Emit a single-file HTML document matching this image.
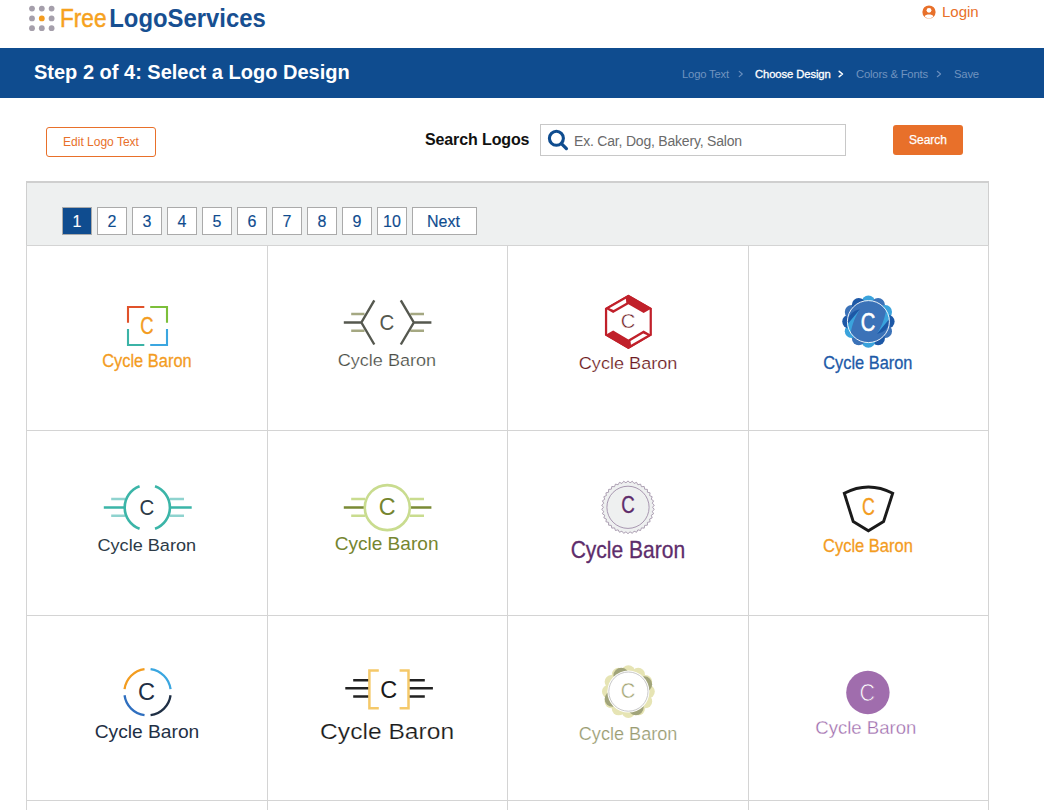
<!DOCTYPE html>
<html><head><meta charset="utf-8">
<style>
*{margin:0;padding:0;box-sizing:border-box}
html,body{width:1044px;height:810px;overflow:hidden;background:#fff;font-family:"Liberation Sans",sans-serif}
.a{position:absolute;white-space:nowrap}
#bar{position:absolute;left:0;top:48px;width:1044px;height:50px;background:#0f4c8f}
.crumb{position:absolute;top:67.6px;font-size:11.3px;color:#6f93bf;letter-spacing:-0.2px}
.pg{position:absolute;top:207px;height:28px;border:1px solid #aaa;background:#fff;color:#0f4c8f;font-size:16px;text-align:center;line-height:28px;-webkit-text-stroke:0.15px currentColor}
.grid{position:absolute;left:26px;top:245px;width:963px;height:600px}
.vl{position:absolute;width:1px;background:#d4d4d4}
.hl{position:absolute;height:1px;background:#d4d4d4}
svg{position:absolute;overflow:visible}
</style></head><body>
<!-- header logo -->
<svg style="left:0;top:0" width="300" height="40">
<g fill="#a59fab">
<circle cx="32" cy="8.6" r="2.9"/><circle cx="41.8" cy="8.6" r="2.9"/><circle cx="51.6" cy="8.6" r="2.9"/>
<circle cx="32" cy="18.4" r="2.9"/><circle cx="51.6" cy="18.4" r="2.9"/>
<circle cx="32" cy="28.2" r="2.9"/><circle cx="41.8" cy="28.2" r="2.9"/><circle cx="51.6" cy="28.2" r="2.9"/>
</g>
<circle cx="41.8" cy="18.4" r="2.9" fill="#f39c1f"/>
<text x="60" y="27.4" font-size="26" fill="#f6a21e" stroke="#f6a21e" stroke-width="0.5" textLength="46.5" lengthAdjust="spacingAndGlyphs">Free</text>
<text x="109.3" y="27.4" font-size="26" font-weight="bold" fill="#174f91" textLength="156.5" lengthAdjust="spacingAndGlyphs">LogoServices</text>
</svg>
<!-- login -->
<svg style="left:920.5px;top:3.9px" width="16" height="16" viewBox="0 0 16 16">
<circle cx="8" cy="8" r="6.6" fill="#e8702a"/>
<circle cx="8" cy="6.3" r="2.4" fill="#fff"/>
<path d="M3.6 12.3 C4.6 9.9 11.4 9.9 12.4 12.3 C11.3 13.6 9.8 14.4 8 14.4 C6.2 14.4 4.7 13.6 3.6 12.3Z" fill="#fff"/>
</svg>
<div class="a" style="left:942px;top:3px;font-size:15px;color:#e8702a">Login</div>

<div id="bar"></div>
<div class="a" style="left:34px;top:61px;font-size:20px;font-weight:bold;color:#fff">Step 2 of 4: Select a Logo Design</div>
<div class="crumb" style="left:682px">Logo Text</div>
<svg style="left:0;top:0" width="1044" height="100"><g fill="none" stroke-linecap="round" stroke-linejoin="round"><path d="M739.2,71.3 L742.3,74 L739.2,76.7" stroke="#6a8fbf" stroke-width="1.1"/><path d="M839.2,71.3 L842.5,74 L839.2,76.7" stroke="#fff" stroke-width="1.5"/><path d="M937.3,71.3 L940.6,74 L937.3,76.7" stroke="#6a8fbf" stroke-width="1.1"/></g></svg>
<div class="crumb" style="left:755px;color:#fff;-webkit-text-stroke:0.3px #fff;letter-spacing:-0.12px">Choose Design</div>
<div class="crumb" style="left:856px">Colors &amp; Fonts</div>
<div class="crumb" style="left:954px">Save</div>

<!-- toolbar -->
<div class="a" style="left:46px;top:127px;width:110px;height:30px;border:1px solid #e8702a;border-radius:3px;color:#e8702a;font-size:12px;text-align:center;line-height:28px">Edit Logo Text</div>
<div class="a" style="left:425px;top:131px;font-size:16px;font-weight:bold;color:#111;letter-spacing:-0.12px">Search Logos</div>
<div class="a" style="left:540px;top:124px;width:306px;height:32px;border:1px solid #c8c8c8;background:#fff"></div>
<svg style="left:547px;top:130px" width="22" height="22" viewBox="0 0 22 22">
<circle cx="9.4" cy="8.3" r="7" fill="none" stroke="#0f4c8f" stroke-width="3.1"/>
<path d="M14.4 13.6 L19.4 18.6" stroke="#0f4c8f" stroke-width="3.3" stroke-linecap="round"/>
</svg>
<div class="a" style="left:574px;top:132.5px;font-size:14px;color:#6a6a6a;letter-spacing:-0.2px">Ex. Car, Dog, Bakery, Salon</div>
<div class="a" style="left:893px;top:125px;width:70px;height:30px;background:#e8702a;border-radius:3px;color:#fff;font-size:12px;text-align:center;line-height:30px;-webkit-text-stroke:0.25px #fff">Search</div>

<!-- grey pagination area -->
<div class="a" style="left:26px;top:181px;width:963px;height:64px;background:#eef0f0;border-top:2px solid #cfcfcf;border-left:1px solid #cfcfcf;border-right:1px solid #cfcfcf"></div>
<div class="pg" style="left:62px;width:30px;background:#0f4c8f;color:#fff">1</div>
<div class="pg" style="left:97px;width:30px">2</div>
<div class="pg" style="left:132px;width:30px">3</div>
<div class="pg" style="left:167px;width:30px">4</div>
<div class="pg" style="left:202px;width:30px">5</div>
<div class="pg" style="left:237px;width:30px">6</div>
<div class="pg" style="left:272px;width:30px">7</div>
<div class="pg" style="left:307px;width:30px">8</div>
<div class="pg" style="left:342px;width:30px">9</div>
<div class="pg" style="left:377px;width:30px">10</div>
<div class="pg" style="left:412px;width:65px;padding-right:2px">Next</div>

<!-- grid lines -->
<div class="vl" style="left:26px;top:245px;height:565px"></div>
<div class="vl" style="left:267px;top:245px;height:565px"></div>
<div class="vl" style="left:507px;top:245px;height:565px"></div>
<div class="vl" style="left:748px;top:245px;height:565px"></div>
<div class="vl" style="left:988px;top:245px;height:565px"></div>
<div class="hl" style="left:26px;top:245px;width:963px"></div>
<div class="hl" style="left:26px;top:430px;width:963px"></div>
<div class="hl" style="left:26px;top:615px;width:963px"></div>
<div class="hl" style="left:26px;top:800px;width:963px"></div>

<!-- LOGOS -->
<svg style="left:0;top:0" width="1044" height="810" font-family="Liberation Sans">
<g fill="none" stroke-width="2.1">
<path d="M144.3,307 H128 V322.8" stroke="#e0522a"/>
<path d="M150.2,307 H167 V322.8" stroke="#7cbf3a"/>
<path d="M128,329 V345 H144.3" stroke="#3bb3a6"/>
<path d="M167,329 V345 H150.2" stroke="#3ba6e0"/>
</g>
<g fill="none" stroke-width="2.4">
<path d="M351.2,314 H364.5 M351.2,330.8 H364.5 M410.3,314 H424 M410.3,330.8 H424" stroke="#a5a882"/>
<path d="M343.8,322.5 H361.4 M374.3,300.4 L361.4,322.5 L374.3,344.5 M413.8,322.5 H431.4 M400.8,300.4 L413.8,322.5 L400.8,344.5" stroke="#55584f"/>
</g>
<polygon points="628.40,294.70 651.87,308.25 651.87,335.35 628.40,348.90 604.93,335.35 604.93,308.25" fill="#c0202a"/>
<polygon points="628.40,297.30 649.62,309.55 649.62,334.05 628.40,346.30 607.18,334.05 607.18,309.55" fill="#fff"/>
<polygon points="604.93,308.25 628.40,294.70 651.87,308.25 643.64,313.00 628.40,304.20 613.16,313.00" fill="#c0202a"/>
<polygon points="609.30,308.32 625.85,298.77 626.29,302.72 613.63,310.03" fill="#fff"/>
<g transform="rotate(180 628.4 321.8)"><polygon points="604.93,308.25 628.40,294.70 651.87,308.25 643.64,313.00 628.40,304.20 613.16,313.00" fill="#c0202a"/><polygon points="609.30,308.32 625.85,298.77 626.29,302.72 613.63,310.03" fill="#fff"/></g>
<circle cx="868.4" cy="321.6" r="22" fill="#3b72b8"/>
<circle cx="868.40" cy="302.20" r="6.8" fill="#3aa3dc"/>
<circle cx="878.10" cy="304.80" r="6.8" fill="#3b72b8"/>
<circle cx="885.20" cy="311.90" r="6.8" fill="#3aa3dc"/>
<circle cx="887.80" cy="321.60" r="6.8" fill="#1d58a6"/>
<circle cx="885.20" cy="331.30" r="6.8" fill="#3b72b8"/>
<circle cx="878.10" cy="338.40" r="6.8" fill="#1d58a6"/>
<circle cx="868.40" cy="341.00" r="6.8" fill="#3aa3dc"/>
<circle cx="858.70" cy="338.40" r="6.8" fill="#3b72b8"/>
<circle cx="851.60" cy="331.30" r="6.8" fill="#3aa3dc"/>
<circle cx="849.00" cy="321.60" r="6.8" fill="#1d58a6"/>
<circle cx="851.60" cy="311.90" r="6.8" fill="#3b72b8"/>
<circle cx="858.70" cy="304.80" r="6.8" fill="#1d58a6"/>
<circle cx="868.4" cy="321.6" r="21" fill="#3b72b8"/>
<path d="M859.6,309.6 Q853.5,317 847.2,324 A21.3,21.3 0 0 0 850.5,335.5 C851.5,327 853.5,320 859.6,309.6Z" fill="#3aa3dc"/><path d="M847.4,320.5 Q849.5,311.5 859.8,309.2 Q853.5,317 847.2,324.5Z" fill="#1d58a6"/>
<g transform="rotate(180 868.4 321.6)"><path d="M859.6,309.6 Q853.5,317 847.2,324 A21.3,21.3 0 0 0 850.5,335.5 C851.5,327 853.5,320 859.6,309.6Z" fill="#3aa3dc"/><path d="M847.4,320.5 Q849.5,311.5 859.8,309.2 Q853.5,317 847.2,324.5Z" fill="#1d58a6"/></g>
<circle cx="868.4" cy="321.6" r="21" fill="none" stroke="#fff" stroke-width="0.9"/>
<g fill="none" stroke-width="2.4">
<path d="M111.2,499 H125 M111.2,515.8 H125 M169.6,499 H184 M169.6,515.8 H184" stroke="#8fd3cf"/>
<path d="M103.8,507.5 H125 M169.6,507.5 H191.7" stroke="#3bb5a8"/>
<path d="M139.57,486.26 A22.6,22.6 0 0 0 139.57,528.74 M155.03,486.26 A22.6,22.6 0 0 1 155.03,528.74" stroke="#3bb5a8" stroke-width="2.6"/>
</g>
<g fill="none" stroke-width="2.4">
<path d="M351.2,499 H365 M351.2,515.8 H365 M409.6,499 H424 M409.6,515.8 H424" stroke="#c9dc8f"/>
<path d="M343.8,507.5 H365 M409.6,507.5 H431.4" stroke="#7a8a35"/>
<circle cx="387.3" cy="507.6" r="22.5" stroke="#c9dc8f" stroke-width="2.6"/>
</g>
<polygon points="628.00,480.90 630.03,482.78 632.35,481.26 634.04,483.45 636.57,482.33 637.88,484.77 640.57,484.08 641.45,486.71 644.22,486.47 644.66,489.20 647.42,489.42 647.41,492.19 650.10,492.86 649.64,495.59 652.18,496.70 651.27,499.31 653.59,500.82 652.26,503.25 654.31,505.12 652.60,507.30 654.31,509.48 652.26,511.35 653.59,513.78 651.27,515.29 652.18,517.90 649.64,519.01 650.10,521.74 647.41,522.41 647.42,525.18 644.66,525.40 644.22,528.13 641.45,527.89 640.57,530.52 637.88,529.83 636.57,532.27 634.04,531.15 632.35,533.34 630.03,531.82 628.00,533.70 625.97,531.82 623.65,533.34 621.96,531.15 619.43,532.27 618.12,529.83 615.43,530.52 614.55,527.89 611.78,528.13 611.34,525.40 608.58,525.18 608.59,522.41 605.90,521.74 606.36,519.01 603.82,517.90 604.73,515.29 602.41,513.78 603.74,511.35 601.69,509.48 603.40,507.30 601.69,505.12 603.74,503.25 602.41,500.82 604.73,499.31 603.82,496.70 606.36,495.59 605.90,492.86 608.59,492.19 608.58,489.42 611.34,489.20 611.78,486.47 614.55,486.71 615.43,484.08 618.12,484.77 619.43,482.33 621.96,483.45 623.65,481.26 625.97,482.78" fill="#eef0f0" stroke="#9a8aa2" stroke-width="0.8"/>
<circle cx="628" cy="507.3" r="21.1" fill="none" stroke="#9580a0" stroke-width="0.8"/>
<path d="M844.3,493.3 Q868.4,480.7 892.7,493.3 L883.6,521.5 L868.4,530.7 L853.2,521.5 Z" fill="none" stroke="#1a1a1a" stroke-width="2.9" stroke-linejoin="miter"/>
<path d="M124.55,689.17 A23.2,23.2 0 0 1 144.52,669.20" fill="none" stroke="#f39c1f" stroke-width="2.3"/>
<path d="M150.58,669.20 A23.2,23.2 0 0 1 170.55,689.17" fill="none" stroke="#3aa6e0" stroke-width="2.3"/>
<path d="M170.55,695.23 A23.2,23.2 0 0 1 150.58,715.20" fill="none" stroke="#1f2f45" stroke-width="2.3"/>
<path d="M144.52,715.20 A23.2,23.2 0 0 1 124.55,695.23" fill="none" stroke="#2f6fbf" stroke-width="2.3"/>
<g fill="none" stroke-width="2.6">
<path d="M345.3,688.3 H369 M353.2,680.2 H369 M353.2,696.5 H369 M408.5,688.3 H432.9 M408.5,680.2 H424.8 M408.5,696.5 H424.8" stroke="#222"/>
<path d="M378.8,670.4 H369.4 V708.2 H378.8 M399.6,670.4 H408.5 V708.2 H399.6" stroke="#f5c96a" stroke-width="2.5"/>
</g>
<circle cx="628.4" cy="691.6" r="22" fill="#e6e4b4"/>
<circle cx="648.00" cy="691.60" r="6.8" fill="#e6e4b4"/>
<circle cx="645.37" cy="701.40" r="6.8" fill="#e6e4b4"/>
<circle cx="638.20" cy="708.57" r="6.8" fill="#e6e4b4"/>
<circle cx="628.40" cy="711.20" r="6.8" fill="#e6e4b4"/>
<circle cx="618.60" cy="708.57" r="6.8" fill="#e6e4b4"/>
<circle cx="611.43" cy="701.40" r="6.8" fill="#e6e4b4"/>
<circle cx="608.80" cy="691.60" r="6.8" fill="#e6e4b4"/>
<circle cx="611.43" cy="681.80" r="6.8" fill="#e6e4b4"/>
<circle cx="618.60" cy="674.63" r="6.8" fill="#e6e4b4"/>
<circle cx="628.40" cy="672.00" r="6.8" fill="#e6e4b4"/>
<circle cx="638.20" cy="674.63" r="6.8" fill="#e6e4b4"/>
<circle cx="645.37" cy="681.80" r="6.8" fill="#e6e4b4"/>
<circle cx="621.24" cy="675.52" r="7.8" fill="#a1a47a"/>
<circle cx="644.35" cy="684.16" r="7.8" fill="#a1a47a"/>
<circle cx="635.84" cy="707.55" r="7.8" fill="#a1a47a"/>
<circle cx="612.45" cy="699.04" r="7.8" fill="#a1a47a"/>
<circle cx="628.4" cy="691.6" r="21" fill="#fff"/>
<circle cx="628.4" cy="691.6" r="19.6" fill="none" stroke="#b9b9b9" stroke-width="0.8"/>
<circle cx="867.9" cy="692.5" r="21.7" fill="#a06dad"/>

<text transform="translate(102.18,366.70) scale(0.8791,1)" font-size="18.70" fill="#f39c1f" stroke="#f39c1f" stroke-width="0.3">Cycle Baron</text>
<text transform="translate(337.70,365.80) scale(1.0487,1)" font-size="17.25" fill="#4c4f47" stroke="#fff" stroke-width="0.2">Cycle Baron</text>
<text transform="translate(578.79,368.70) scale(1.0498,1)" font-size="17.25" fill="#6e1b22" stroke="#fff" stroke-width="0.2">Cycle Baron</text>
<text transform="translate(823.18,369.40) scale(0.8980,1)" font-size="18.26" fill="#1d5aa8" stroke="#1d5aa8" stroke-width="0.3">Cycle Baron</text>
<text transform="translate(97.49,550.70) scale(1.0498,1)" font-size="17.25" fill="#2c3a47">Cycle Baron</text>
<text transform="translate(334.65,550.30) scale(1.0206,1)" font-size="18.70" fill="#75852f">Cycle Baron</text>
<text transform="translate(570.65,557.50) scale(0.9070,1)" font-size="23.19" fill="#5e2d6b" stroke="#5e2d6b" stroke-width="0.3">Cycle Baron</text>
<text transform="translate(822.97,551.90) scale(0.8970,1)" font-size="18.41" fill="#f39c1f" stroke="#f39c1f" stroke-width="0.3">Cycle Baron</text>
<text transform="translate(94.74,737.90) scale(1.0276,1)" font-size="18.70" fill="#1f3045">Cycle Baron</text>
<text transform="translate(320.07,738.90) scale(1.0818,1)" font-size="22.75" fill="#1a1a1a" stroke="#fff" stroke-width="0.2">Cycle Baron</text>
<text transform="translate(578.79,739.90) scale(1.0324,1)" font-size="17.54" fill="#9a9c72" stroke="#fff" stroke-width="0.2">Cycle Baron</text>
<text transform="translate(815.27,733.60) scale(0.9783,1)" font-size="18.99" fill="#a06dad" stroke="#fff" stroke-width="0.32">Cycle Baron</text>
<text transform="translate(140.18,333.76) scale(0.7557,1)" font-size="24.37" fill="#f39c1f" stroke="#f39c1f" stroke-width="0.35">C</text>
<text transform="translate(379.48,330.08) scale(0.9260,1)" font-size="22.11" fill="#55584f">C</text>
<text transform="translate(620.79,328.39) scale(0.9606,1)" font-size="20.99" fill="#6d1a1f" stroke="#fff" stroke-width="0.45">C</text>
<text transform="translate(860.79,331.34) scale(0.7821,1)" font-size="25.77" fill="#ffffff" stroke="#fff" stroke-width="0.6">C</text>
<text transform="translate(139.48,515.08) scale(0.9260,1)" font-size="22.11" fill="#2c3a47">C</text>
<text transform="translate(378.63,514.76) scale(0.9920,1)" font-size="23.52" fill="#75852f">C</text>
<text transform="translate(621.26,513.36) scale(0.7777,1)" font-size="24.08" fill="#5e2d6b" stroke="#5e2d6b" stroke-width="0.35">C</text>
<text transform="translate(861.91,515.06) scale(0.7425,1)" font-size="23.94" fill="#f39c1f" stroke="#f39c1f" stroke-width="0.35">C</text>
<text transform="translate(137.92,699.76) scale(1.0055,1)" font-size="23.52" fill="#1f3045">C</text>
<text transform="translate(380.13,697.56) scale(0.9754,1)" font-size="24.08" fill="#1a1a1a">C</text>
<text transform="translate(620.79,697.98) scale(0.9175,1)" font-size="21.97" fill="#a3a474" stroke="#fff" stroke-width="0.45">C</text>
<text transform="translate(859.43,701.16) scale(0.9056,1)" font-size="23.66" fill="#ffffff" stroke="#a06dad" stroke-width="0.7">C</text>

</svg>
</body></html>
